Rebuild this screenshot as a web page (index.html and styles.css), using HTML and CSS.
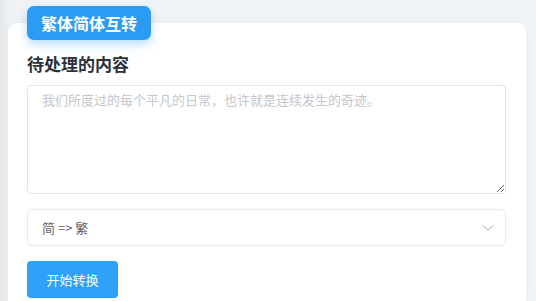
FILE: index.html
```html
<!DOCTYPE html>
<html lang="zh">
<head>
<meta charset="utf-8">
<link rel="stylesheet" href="styles.css">
</head>
<body>
<div class="page">
  <div class="badge">繁体简体互转</div>
  <div class="card">
    <h2 class="title">待处理的内容</h2>
    <textarea class="input" placeholder="我们所度过的每个平凡的日常，也许就是连续发生的奇迹。"></textarea>
    <div class="select">
      <span class="select-text">简 =&gt; 繁</span>
      <svg class="chevron" width="12" height="8" viewBox="0 0 12 8"><path d="M1 1.5 L6 6 L11 1.5" fill="none" stroke="#c0c4cc" stroke-width="1.1"/></svg>
    </div>
    <button class="btn">开始转换</button>
  </div>
</div>
</body>
</html>
```
FILE: styles.css
```css
html, body {
  margin: 0;
  padding: 0;
  height: 100%;
  overflow: hidden;
}
body {
  background: linear-gradient(to right, #e4e7ea 0px, #eef1f4 8px, #f1f4f7 30px, #f1f4f7 100%);
  font-family: "Noto Sans CJK SC", "Noto Sans", sans-serif;
}
.page {
  position: relative;
  padding: 23px 10px 0 8px;
}
.badge {
  position: absolute;
  left: 27px;
  top: 6px;
  width: 124px;
  height: 34px;
  box-sizing: border-box;
  background: #2b9bf4;
  border-radius: 7px;
  color: #fff;
  font-size: 16px;
  font-weight: 700;
  line-height: 34px;
  text-align: center;
  box-shadow: 0 4px 10px rgba(43, 155, 244, 0.35);
  z-index: 2;
}
.card {
  background: #fff;
  border-radius: 9px 9px 0 0;
  padding: 29px 20px 0 19px;
  box-shadow: 0 0 8px rgba(0, 0, 0, 0.04);
  display: flex;
  flex-direction: column;
  align-items: flex-start;
  height: 278px;
  box-sizing: border-box;
}
.title {
  margin: 0;
  font-size: 17px;
  font-weight: 700;
  line-height: 24px;
  color: #2b323b;
}
.input {
  margin-top: 9px;
  width: 100%;
  height: 109px;
  box-sizing: border-box;
  border: 1px solid #e2e5ea;
  border-radius: 4px;
  padding: 4px 14px;
  font-family: inherit;
  font-size: 13px;
  line-height: 20px;
  resize: vertical;
  outline: none;
}
.input::placeholder {
  color: #c3c6cc;
}
.select {
  margin-top: 15px;
  width: 100%;
  height: 37px;
  flex-shrink: 0;
  box-sizing: border-box;
  border: 1px solid #e8eaee;
  border-radius: 4px;
  display: flex;
  align-items: center;
  justify-content: space-between;
  padding: 0 11px 0 14px;
}
.select-text {
  font-size: 13px;
  color: #5f6166;
}
.chevron {
  display: block;
}
.btn {
  margin-top: 15px;
  width: 91px;
  height: 37px;
  flex-shrink: 0;
  border: none;
  border-radius: 4px;
  background: #2ea1f8;
  color: #fff;
  font-family: inherit;
  font-size: 13px;
  padding: 0;
}
```
